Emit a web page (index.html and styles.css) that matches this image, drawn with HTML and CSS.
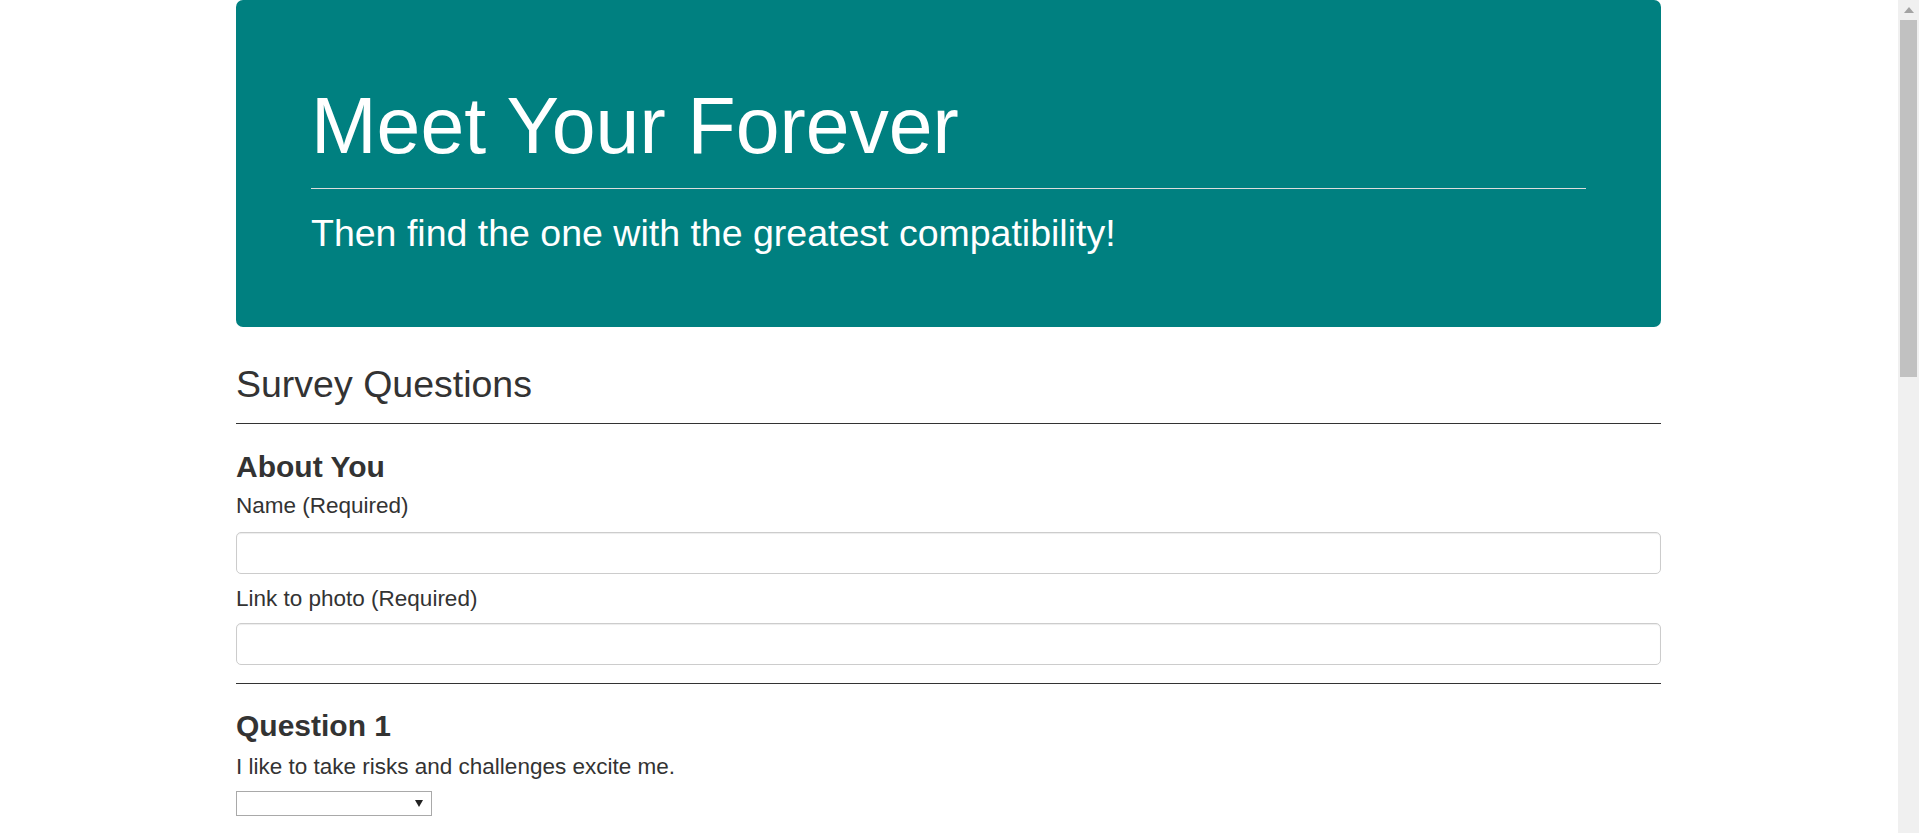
FILE: index.html
```html
<!DOCTYPE html>
<html lang="en">
<head>
<meta charset="utf-8">
<title>Meet Your Forever</title>
<link rel="stylesheet" href="styles.css">
</head>
<body>
<div class="scrollbar">
  <div class="sb-arrow"></div>
  <div class="sb-thumb"></div>
</div>
<div class="page">
  <div class="container">
    <header class="jumbotron">
      <h1 class="hero-title">Meet Your Forever</h1>
      <hr class="hero-rule">
      <h2 class="hero-sub">Then find the one with the greatest compatibility!</h2>
    </header>

    <h2 class="survey-title">Survey Questions</h2>
    <hr class="rule rule-top">

    <form class="survey">
      <section class="block">
        <h3 class="block-title">About You</h3>
        <label class="field-label first" for="name">Name (Required)</label>
        <input class="field" id="name" type="text">
        <label class="field-label" for="photo">Link to photo (Required)</label>
        <input class="field" id="photo" type="text">
      </section>
      <hr class="rule rule-mid">
      <section class="block">
        <h3 class="block-title q1">Question 1</h3>
        <p class="question">I like to take risks and challenges excite me.</p>
        <div class="select-wrap">
          <select class="select">
            <option></option>
            <option>1 (Strongly Disagree)</option>
            <option>2</option>
            <option>3</option>
            <option>4</option>
            <option>5 (Strongly Agree)</option>
          </select>
        </div>
      </section>
    </form>
  </div>
</div>
</body>
</html>
```

FILE: styles.css
```css
html, body {
  overflow: hidden;
  height: 100%;
}

body {
  margin: 0 22px 0 0;
  background: #fff;
  color: #333;
  font-family: "Liberation Sans", Arial, sans-serif;
}

.scrollbar {
  position: fixed;
  top: 0;
  right: 0;
  width: 21px;
  height: 100%;
  background: #f0f0f0;
}

.sb-arrow {
  position: absolute;
  top: 7px;
  left: 6px;
  width: 0;
  height: 0;
  border-left: 5px solid transparent;
  border-right: 5px solid transparent;
  border-bottom: 6px solid #a3a3a3;
}

.sb-thumb {
  position: absolute;
  top: 20px;
  left: 2px;
  width: 17px;
  height: 357px;
  background: #c1c1c1;
}

.page {
  width: 100%;
}

.container {
  width: 1425px;
  margin: 0 auto;
}

.jumbotron {
  background: #008080;
  color: #fff;
  border-radius: 7px;
  padding: 60px 75px;
}

.hero-title {
  margin: 23px 0 0;
  font-size: 78.75px;
  line-height: 1.1;
  font-weight: 400;
}

.hero-rule {
  margin: 18.4px 0 0;
  border: 0;
  border-top: 1px solid #ddd;
  height: 0;
}

.hero-sub {
  margin: 24.4px 0 12.35px;
  font-size: 37.5px;
  line-height: 1.1;
  font-weight: 400;
}

.survey-title {
  margin: 37px 0 0;
  font-size: 37.5px;
  line-height: 1.1;
  font-weight: 400;
}

.rule {
  border: 0;
  border-top: 1px solid #333;
  height: 0;
  margin: 0;
}

.rule-top {
  margin-top: 18px;
}

.rule-mid {
  margin-top: 18px;
}

.block-title {
  margin: 25.4px 0 0;
  font-size: 30px;
  line-height: 1.1;
  font-weight: 700;
}

.block-title.q1 {
  margin-top: 24.4px;
}

.field-label {
  display: block;
  margin: 8.5px 0 8.3px;
  font-size: 22.5px;
  line-height: 1.42857;
}

.field-label.first {
  margin-top: 7.5px;
  margin-bottom: 10px;
}

.field {
  display: block;
  box-sizing: border-box;
  width: 100%;
  height: 42px;
  margin: 0;
  padding: 7px 15px;
  border: 1px solid #ccc;
  border-radius: 5px;
  box-shadow: inset 0 1px 1px rgba(0, 0, 0, 0.075);
  font-family: inherit;
  font-size: 17.5px;
  color: #555;
  background: #fff;
}

.question {
  margin: 9.4px 0 0;
  font-size: 22.5px;
  line-height: 1.42857;
}

.select-wrap {
  position: relative;
  width: 196px;
  margin-top: 7.75px;
}

.select {
  display: block;
  box-sizing: border-box;
  width: 196px;
  height: 25px;
  margin: 0;
  padding: 0 4px;
  border: 1px solid #a9a9a9;
  border-radius: 0;
  background: #fff;
  -webkit-appearance: none;
  appearance: none;
  font-family: inherit;
  font-size: 16px;
  color: #000;
}

.select-wrap::after {
  content: "";
  position: absolute;
  top: 9px;
  right: 9px;
  width: 0;
  height: 0;
  border-left: 4px solid transparent;
  border-right: 4px solid transparent;
  border-top: 7px solid #222;
  pointer-events: none;
}
```
